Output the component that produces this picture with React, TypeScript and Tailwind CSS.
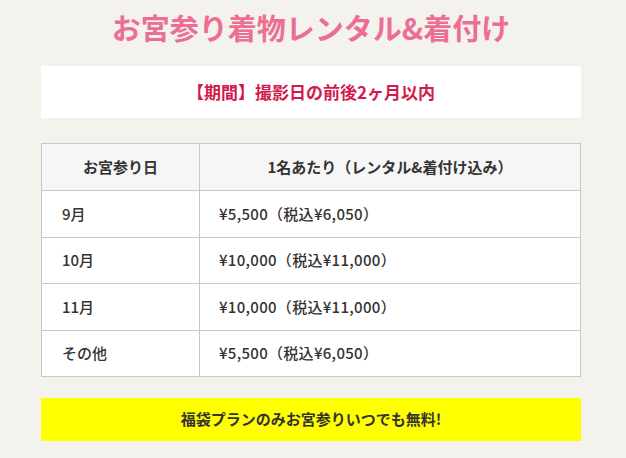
const ROWS = [
  { day: "9月", price: "¥5,500（税込¥6,050）" },
  { day: "10月", price: "¥10,000（税込¥11,000）" },
  { day: "11月", price: "¥10,000（税込¥11,000）" },
  { day: "その他", price: "¥5,500（税込¥6,050）" },
];

export default function App() {
  return (
    <div className="min-h-[458px] w-[626px] bg-[#f3f2ed] pl-[41px] pr-[45px] pt-[8px] font-['Noto_Sans_CJK_JP',sans-serif] text-[#333]">
      <h1 className="text-center text-[29px] font-bold leading-[38px] text-[#ec6f93]">
        お宮参り着物レンタル&amp;着付け
      </h1>

      <div className="mt-[20px] flex h-[52px] items-center justify-center bg-white text-[17px] font-bold text-[#d21a4c]">
        【期間】撮影日の前後2ヶ月以内
      </div>

      <table className="mt-[25px] w-full border-collapse border border-[#c8c8c8] text-[15px] font-medium">
        <thead>
          <tr className="h-[47px] bg-[#f6f6f6]">
            <th className="w-[158px] border border-[#c8c8c8] font-bold">お宮参り日</th>
            <th className="border border-[#c8c8c8] font-bold">1名あたり（レンタル&amp;着付け込み）</th>
          </tr>
        </thead>
        <tbody className="bg-white">
          {ROWS.map((r) => (
            <tr key={r.day} className="h-[46.5px]">
              <td className="border border-[#c8c8c8] pl-[20px]">{r.day}</td>
              <td className="border border-[#c8c8c8] pl-[19px] tracking-[0.3px]">{r.price}</td>
            </tr>
          ))}
        </tbody>
      </table>

      <div className="mt-[21px] flex h-[43px] items-center justify-center bg-[#ffff00] text-[15px] font-bold">
        福袋プランのみお宮参りいつでも無料!
      </div>
    </div>
  );
}
